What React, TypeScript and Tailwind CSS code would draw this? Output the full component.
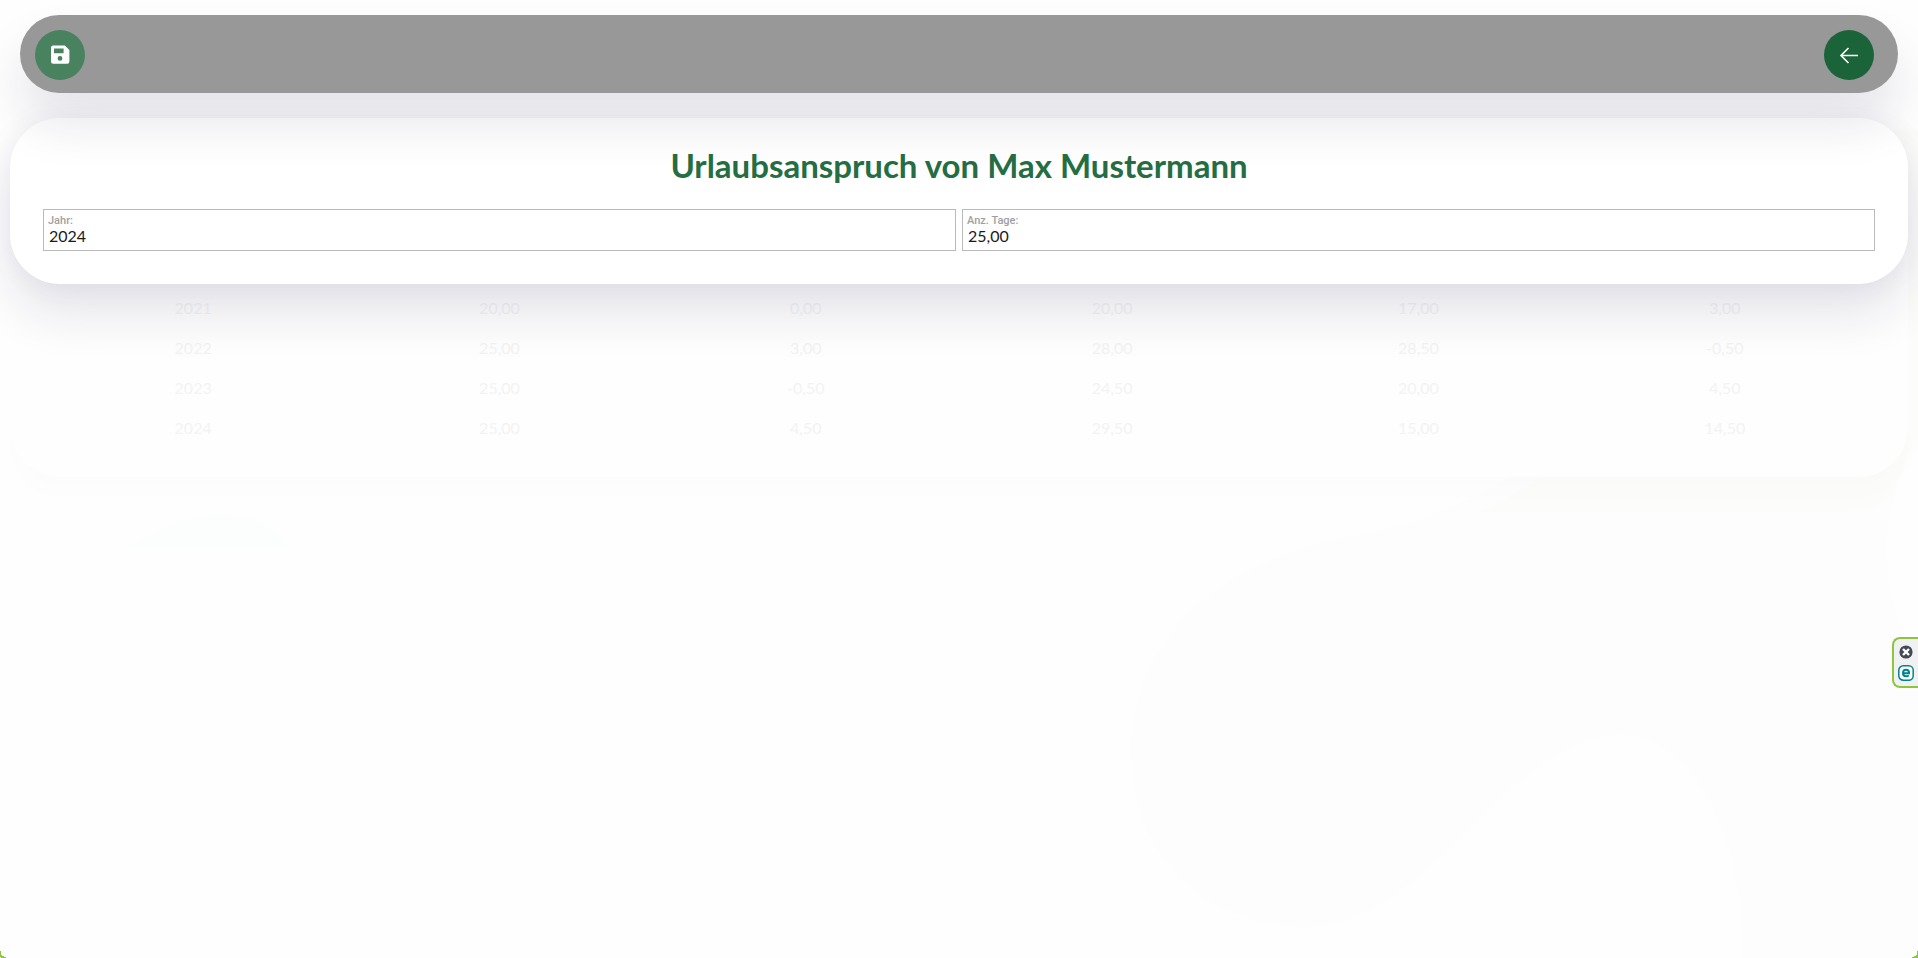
import React, { useState } from 'react';

const entitlements = [
  ['2021', '20,00', '0,00', '20,00', '17,00', '3,00'],
  ['2022', '25,00', '3,00', '28,00', '28,50', '-0,50'],
  ['2023', '25,00', '-0,50', '24,50', '20,00', '4,50'],
  ['2024', '25,00', '4,50', '29,50', '15,00', '14,50'],
];

const SaveIcon: React.FC = () => (
  <svg className="w-5 h-5" viewBox="0 0 20 20" fill="currentColor" fillRule="evenodd" aria-hidden="true">
    <path d="M3.2 .4H14.8L19.4 5V16.5a2.2 2.2 0 0 1-2.2 2.2H3.2A2.2 2.2 0 0 1 1 16.5V2.6A2.2 2.2 0 0 1 3.2 .4ZM4 3.4V8.2H13.6V3.4ZM10 11a2.4 2.4 0 1 0 0 4.8a2.4 2.4 0 1 0 0-4.8Z" />
  </svg>
);

const BackIcon: React.FC = () => (
  <svg className="w-5 h-5" viewBox="0 0 20 20" fill="none" stroke="currentColor" strokeWidth="1.6" aria-hidden="true">
    <path d="M19 10.5H2M9.5 3L2 10.5L9.5 18" />
  </svg>
);

const Backdrop: React.FC = () => (
  <svg className="absolute inset-0 w-full h-full -z-10" viewBox="0 0 1918 958" preserveAspectRatio="none" aria-hidden="true">
    <path fill="#fdfdfd" d="M1918 450C1885 490 1880 560 1895 610C1903 635 1912 650 1918 660V958H1742C1745 850 1700 735 1620 735C1500 740 1430 930 1300 928C1180 920 1130 830 1130 750C1135 620 1240 560 1340 538C1480 515 1570 450 1625 365L1700 220H1918Z" />
    <path fill="#fcfcfa" d="M1918 130V435C1905 455 1897 480 1893 497C1880 506 1862 512 1840 512H1478C1500 503 1522 490 1540 477L1700 400L1850 130Z" />
    <path fill="#fcfefd" d="M125 547C160 530 190 513 222 513C250 513 275 528 290 547Z" />
  </svg>
);

interface FieldProps {
  id: string;
  label: string;
  value: string;
  onChange: (value: string) => void;
}

const Field: React.FC<FieldProps> = ({ id, label, value, onChange }) => (
  <div className="flex-1 min-w-0 h-[42px] border border-[#bababa] bg-transparent px-1 pt-[5px]">
    <label htmlFor={id} className="block font-[Roboto] font-medium text-[11px] leading-3 text-[#a0a0a0]">{label}</label>
    <input
      id={id}
      type="text"
      value={value}
      onChange={e => onChange(e.target.value)}
      className="block w-full h-[18px] px-px font-[Lato] text-base leading-[18px] text-[#1a1a1a] bg-transparent outline-none"
    />
  </div>
);

const App: React.FC = () => {
  const [year, setYear] = useState('2024');
  const [days, setDays] = useState('25,00');

  return (
    <div className="relative isolate min-h-screen overflow-hidden bg-[#fefefe] font-[Lato,sans-serif]">
      <Backdrop />

      <header className="relative z-20 mx-5 mt-[15px] h-[78px] px-[15px] pt-[15px] flex justify-between items-start rounded-full bg-[#989898] shadow-[0_30px_50px_rgba(30,20,75,0.11)]">
        <button type="button" aria-label="Speichern" className="w-[50px] h-[50px] rounded-full bg-[#48825f] text-white flex items-center justify-center">
          <SaveIcon />
        </button>
        <button type="button" aria-label="Zurück" className="w-[50px] h-[50px] mr-[9px] rounded-full bg-[#1b6439] text-white flex items-center justify-center">
          <BackIcon />
        </button>
      </header>

      <main>
        <section className="relative z-10 mx-2.5 mt-[25px] px-[33px] pt-[27px] pb-[33px] rounded-[50px] bg-white shadow-[0_30px_50px_rgba(30,20,75,0.11),0_0_30px_rgba(30,20,75,0.05)]">
          <h1 className="text-center text-[33px] leading-10 font-bold text-[#256d43]">Urlaubsanspruch von Max Mustermann</h1>
          <form className="flex gap-1.5 mt-6" onSubmit={e => e.preventDefault()}>
            <Field id="jahr" label="Jahr:" value={year} onChange={setYear} />
            <Field id="tage" label="Anz. Tage:" value={days} onChange={setDays} />
          </form>
        </section>

        <section className="mx-2.5 -mt-[100px] px-[30px] pt-[104px] pb-[29px] rounded-[50px] bg-[#fefefe] shadow-[0_20px_10px_rgba(0,0,0,0.006)]">
          <table className="w-full table-fixed text-center text-base leading-6 text-[#f3f3f3]">
            <tbody>
              {entitlements.map((row, i) => (
                <tr key={i} className="h-10">
                  {row.map((cell, j) => (
                    <td key={j} className="p-0">{cell}</td>
                  ))}
                </tr>
              ))}
            </tbody>
          </table>
        </section>
      </main>

      {/* Browser extension tab on the right edge */}
      <aside className="fixed right-0 top-[637px] z-30 w-[26px] h-[51px] border-2 border-r-0 border-[#8cc63f] rounded-l-lg bg-[#f1f1f1] flex flex-col items-center pt-[5px] gap-1.5">
        <button type="button" aria-label="Schließen" className="w-4 h-[15px] flex items-center justify-center">
          <svg className="w-[14px] h-[14px]" viewBox="0 0 14 14" aria-hidden="true">
            <circle cx="7" cy="7" r="6.6" fill="#434956" />
            <path d="M4 4L10 10M10 4L4 10" stroke="#fff" strokeWidth="2.4" />
          </svg>
        </button>
        <svg className="w-4 h-4" viewBox="0 0 16 16" fill="none" stroke="#00838f" aria-hidden="true">
          <rect x=".8" y=".8" width="14.4" height="14.4" rx="4.5" strokeWidth="1.5" fill="#fff" />
          <path d="M4.8 8.3H11V7.6C11 5.4 9.8 4.7 8 4.7S5 5.8 5 8s1.2 3.3 3 3.3c1.3 0 2.2-.3 2.8-.9" strokeWidth="2" />
        </svg>
      </aside>

      <svg className="fixed left-0 bottom-0 z-30 w-1.5 h-[7px]" viewBox="0 0 6 7" fill="#8cc63f" aria-hidden="true">
        <path d="M0 0H1V4H2V5H4V6H6V7H1V6H0Z" />
      </svg>
      <svg className="fixed right-0 bottom-0 z-30 w-1.5 h-[7px]" viewBox="0 0 6 7" fill="#8cc63f" aria-hidden="true">
        <path d="M6 0H5V4H4V5H2V6H0V7H6Z" />
      </svg>
    </div>
  );
};

export default App;
